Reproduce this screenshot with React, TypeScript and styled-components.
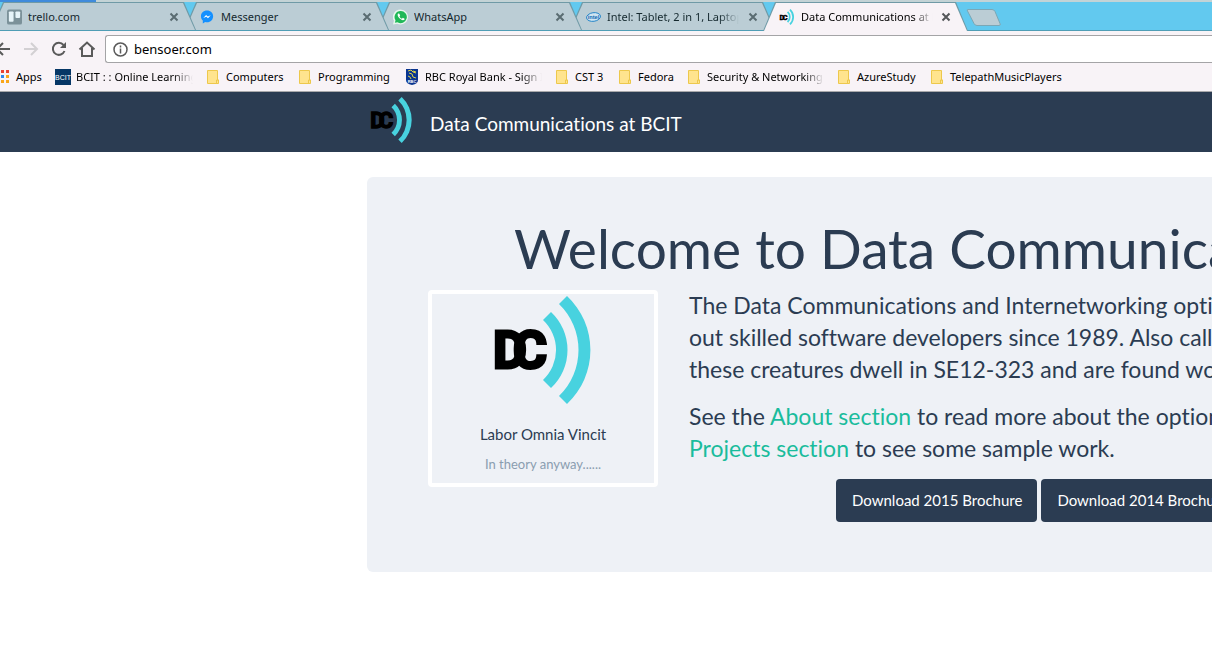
import React from "react";
import styled, { createGlobalStyle, css } from "styled-components";

const GlobalStyle = createGlobalStyle`
  * { box-sizing: border-box; }
  html, body { margin: 0; padding: 0; }
  body {
    background: #fff;
    overflow: hidden;
    font-family: Lato, "Liberation Sans", sans-serif;
    font-variant-ligatures: none;
    color: #2b3c52;
  }
`;

const Chrome = styled.div`
  background: #f8f3f7;
  border-bottom: 1px solid #a9a9ab;
  font-family: "Noto Sans", "Open Sans", sans-serif;
  font-size: 11px;
  line-height: 16px;
  color: #000;
`;

const TopEdge = styled.div`
  height: 2px;
  background: linear-gradient(to right, #3f8bdc 96px, #c3d3d6 96px);
`;

const TabStrip = styled.div`
  display: flex;
  height: 29px;
  background: #62c9ef;
  border-bottom: 1px solid #4f9db5;
`;

const Tabs = styled.div`
  display: flex;
  margin-left: -9px;
`;

const Tab = styled.div<{ $active?: boolean; $order: number }>`
  position: relative;
  z-index: ${(p) => p.$order};
  display: flex;
  align-items: center;
  flex: none;
  width: 205px;
  height: ${(p) => (p.$active ? 29 : 28)}px;
  margin-right: -12px;
  padding: ${(p) => (p.$active ? "1px 15px 0 16px" : "2px 15px 0 16px")};
  gap: 6px;
  color: ${(p) => (p.$active ? "#000" : "#14282e")};

  &::before,
  &::after {
    content: "";
    position: absolute;
    z-index: -1;
    inset: 0;
    background: #6f9aa6;
    clip-path: polygon(12px 0, calc(100% - 12px) 0, 100% 100%, 0 100%);
  }
  &::after {
    inset: 1px 1px 0;
    background: ${(p) => (p.$active ? "#f8f3f7" : "#bbcdd5")};
  }
`;

const fade = css`
  mask-image: linear-gradient(to right, #000 calc(100% - 20px), transparent);
`;

const TabTitle = styled.span<{ $fade?: boolean }>`
  flex: none;
  width: 132px;
  overflow: hidden;
  white-space: nowrap;
  ${(p) => p.$fade && fade}
`;

const CloseButton = styled.button`
  display: flex;
  align-items: center;
  justify-content: center;
  width: 16px;
  height: 16px;
  padding: 0;
  border: 0;
  background: none;
`;

const NewTabButton = styled.button`
  width: 36px;
  height: 19px;
  margin: 6px 0 0 10px;
  padding: 0;
  border: 0;
  background: none;
  svg { display: block; }
`;

const Toolbar = styled.div`
  display: flex;
  align-items: center;
  height: 32px;
  padding: 4px 0 0;
`;

const ToolButton = styled.button`
  display: flex;
  flex: none;
  width: 28px;
  height: 28px;
  padding: 0;
  border: 0;
  background: none;
  align-items: center;
  justify-content: center;
`;

const ToolButtons = styled.div`
  display: flex;
  flex: none;
  width: 105px;
  ${ToolButton}:first-child { margin-left: -11px; }
`;

const AddressBox = styled.label`
  display: flex;
  flex: 1;
  align-items: center;
  gap: 6px;
  height: 28px;
  padding-left: 7px;
  background: #fff;
  border: 1px solid #a4a4a6;
  border-right: 0;
  border-radius: 3px 0 0 3px;
`;

const AddressInput = styled.input`
  flex: 1;
  min-width: 0;
  padding: 0;
  border: 0;
  outline: 0;
  background: none;
  font: 13px "Noto Sans", "Open Sans", sans-serif;
  color: #000;
`;

const Bookmarks = styled.nav`
  display: flex;
  align-items: center;
  gap: 12px;
  height: 28px;
  overflow: hidden;
`;

const Bookmark = styled.a<{ $first?: boolean }>`
  display: flex;
  flex: none;
  align-items: center;
  gap: ${(p) => (p.$first ? 6 : 5)}px;
  color: inherit;
  text-decoration: none;
  white-space: nowrap;
  svg { flex: none; }
`;

const BookmarkLabel = styled.span<{ $width: number; $fade?: boolean }>`
  width: ${(p) => p.$width}px;
  ${(p) => p.$fade && "overflow: hidden;"}
  ${(p) => p.$fade && fade}
`;

const SiteHeader = styled.header`
  height: 60px;
  padding-left: 371px;
  background: #2b3c52;
`;

const Brand = styled.a`
  display: inline-flex;
  align-items: center;
  gap: 18px;
  height: 60px;
  color: #fff;
  font-size: 19px;
  line-height: 24px;
  text-decoration: none;
  white-space: nowrap;
  svg { margin-bottom: 4px; }
  span { padding-top: 3px; }
`;

const Main = styled.main`
  padding: 25px 0 81px 367px;
`;

const Jumbotron = styled.section`
  padding: 39px 0 50px 61px;
  background: #eef1f6;
  border-radius: 6px 0 0 6px;
  overflow: hidden;
`;

const Title = styled.h1`
  margin: 0;
  padding-left: 86px;
  font-size: 55px;
  font-weight: 400;
  line-height: 64px;
  white-space: nowrap;
`;

const Columns = styled.div`
  display: flex;
  align-items: flex-start;
  gap: 31px;
  padding-top: 9px;
`;

const Tile = styled.figure`
  flex: none;
  display: flex;
  flex-direction: column;
  align-items: center;
  width: 230px;
  margin: 1px 0 0;
  padding: 2px 0 9px;
  border: 4px solid #fff;
  border-radius: 4px;
  font-size: 15px;
  line-height: 20px;
`;

const Motto = styled.figcaption`
  margin-top: 20px;
  text-align: center;
  small {
    display: block;
    margin-top: 10px;
    font-size: 13px;
    color: #8a9db0;
  }
`;

const Copy = styled.div`
  flex: 1;
  min-width: 0;
  white-space: nowrap;
  p {
    margin: 0 0 15px;
    font-size: 23px;
    line-height: 32px;
  }
  a { color: #1abc9c; text-decoration: none; }
`;

const ButtonRow = styled.div`
  display: flex;
  gap: 4px;
  padding-left: 147px;
`;

const BrochureButton = styled.button`
  flex: none;
  height: 43px;
  padding: 0 15px 2px 16px;
  border: 0;
  border-radius: 4px;
  background: #2b3c52;
  color: #fff;
  font: 15px/24px Lato, sans-serif;
  font-variant-ligatures: none;
`;

const LogoMark = styled.svg`
  overflow: visible;
`;

const Logo = ({ width, height }: { width: number; height: number }) => (
  <LogoMark width={width} height={height} viewBox="1 0 96 108" aria-hidden="true">
    <g
      fill="#000"
      stroke="#000"
      strokeWidth="3"
      fontFamily="Roboto, sans-serif"
      fontWeight="700"
      fontSize="52"
    >
      <text x="-1" y="72">D</text>
      <text x="19" y="72">C</text>
    </g>
    <path
      fill="#48d2df"
      d="M73 0A74 74 0 0 1 73 108L65 100A64 64 0 0 0 65 8ZM57 16A52 52 0 0 1 57 92L49 84A41 41 0 0 0 49 24Z"
    />
  </LogoMark>
);

const FolderIcon = () => (
  <svg width="16" height="16" viewBox="0 0 16 16" aria-hidden="true">
    <path d="M2.500 1.500h10v9.500h1v3.500h-11z" fill="#ffe48e" stroke="#edc84c" />
    <path d="M11.500 14v-3h2" fill="none" stroke="#edc84c" />
  </svg>
);

const AppsIcon = () => (
  <svg width="10" height="16" viewBox="0 0 10 16" aria-hidden="true">
    {["#ea4335", "#2f88f0", "#f9a61a"].map((c, i) => (
      <g key={c} fill={c}>
        <rect x="1" y={1 + i * 5} width="3" height="3" />
        <rect x="6" y={1 + i * 5} width="3" height="3" fill={i === 0 ? c : "#f9a61a"} />
      </g>
    ))}
  </svg>
);

const BcitIcon = () => (
  <svg width="16" height="16" viewBox="0 0 16 16" aria-hidden="true">
    <rect width="16" height="16" fill="#063766" />
    <text x="8" y="11" fill="#fff" fontSize="7" textAnchor="middle" fontFamily="Liberation Sans, sans-serif">BCIT</text>
  </svg>
);

const RbcIcon = () => (
  <svg width="16" height="16" viewBox="0 0 16 16" aria-hidden="true">
    <path d="M2 0h12v11q0 4-6 5q-6-1-6-5z" fill="#0a3590" />
    <path d="M4 2l3-1 2 2 3 1M5 4l3 1 1 3 3 1M4 7l2 1 1 2M9 2l3 1" stroke="#d9d14a" fill="none" />
    <text x="8" y="14" fill="#fff" fontSize="4" fontWeight="700" textAnchor="middle" fontFamily="Liberation Sans, sans-serif">RBC</text>
  </svg>
);

const TrelloIcon = () => (
  <svg width="16" height="16" viewBox="0 0 16 16" aria-hidden="true">
    <rect width="16" height="16" rx="2" fill="#7b9199" />
    <rect x="2" y="2" width="5" height="11" rx="1" fill="#e6f4f9" />
    <rect x="9" y="2" width="5" height="7" rx="1" fill="#e6f4f9" />
  </svg>
);

const MessengerIcon = () => (
  <svg width="16" height="16" viewBox="0 0 16 16" aria-hidden="true">
    <path d="M7.500 1C3.500 1 1 3.700 1 7.200c0 2 .8 3.500 2 4.600V15l2.500-1.600c5 1.200 8.500-2 8.500-6.200C14 3.700 11.500 1 7.500 1z" fill="#1490ff" />
    <path d="M3.500 9l3-3.200L8.300 7.400 11.500 6l-3 3.200L6.800 7.700z" fill="#fff" />
  </svg>
);

const WhatsAppIcon = () => (
  <svg width="16" height="16" viewBox="0 0 16 16" aria-hidden="true">
    <path d="M8 0a8 8 0 1 1-3.500 15.200L0 16l1-4A8 8 0 0 1 8 0z" fill="#e8f7ee" />
    <path d="M8 1.500a6.500 6.500 0 1 1-3.200 12L2 14.200l.7-2.700A6.500 6.500 0 0 1 8 1.500z" fill="#20b858" />
    <path d="M5.500 4.300c-2.200 2.200 2.700 7.600 5.800 7 .8-.2 1.200-1 1-1.500l-1.800-.9-1 1c-1.200-.5-2-1.300-2.600-2.500l.7-.8-.8-2z" fill="#fff" />
  </svg>
);

const IntelIcon = () => (
  <svg width="16" height="16" viewBox="0 0 16 16" aria-hidden="true">
    <ellipse cx="8" cy="8" rx="7.500" ry="4.600" fill="#cfe4f1" stroke="#2384c8" transform="rotate(-8 8 8)" />
    <text x="8" y="10" fill="#0d68b1" fontSize="6" fontWeight="700" textAnchor="middle" fontFamily="Liberation Sans, sans-serif">intel</text>
  </svg>
);

const CloseIcon = ({ color }: { color: string }) => (
  <svg width="10" height="10" viewBox="0 0 10 10" aria-hidden="true">
    <path d="M1.500 1.500l7 7m0-7l-7 7" stroke={color} strokeWidth="2" />
  </svg>
);

const tabs = [
  { title: "trello.com", icon: <TrelloIcon /> },
  { title: "Messenger", icon: <MessengerIcon /> },
  { title: "WhatsApp", icon: <WhatsAppIcon /> },
  { title: "Intel: Tablet, 2 in 1, Laptop", icon: <IntelIcon />, fade: true },
  { title: "Data Communications at BCIT", icon: <Logo width={16} height={16} />, fade: true, active: true },
];

const bookmarks = [
  { label: "Apps", icon: <AppsIcon />, width: 27 },
  { label: "BCIT : : Online Learning", icon: <BcitIcon />, width: 117, fade: true },
  { label: "Computers", icon: <FolderIcon />, width: 59 },
  { label: "Programming", icon: <FolderIcon />, width: 74 },
  { label: "RBC Royal Bank - Sign In", icon: <RbcIcon />, width: 117, fade: true },
  { label: "CST 3", icon: <FolderIcon />, width: 30 },
  { label: "Fedora", icon: <FolderIcon />, width: 36 },
  { label: "Security & Networking", icon: <FolderIcon />, width: 117, fade: true },
  { label: "AzureStudy", icon: <FolderIcon />, width: 60 },
  { label: "TelepathMusicPlayers", icon: <FolderIcon />, width: 116 },
];

export default function App() {
  return (
    <>
      <GlobalStyle />
      <Chrome>
        <TopEdge />
        <TabStrip>
          <Tabs>
            {tabs.map((t, i) => (
              <Tab key={t.title} $active={t.active} $order={t.active ? 10 : tabs.length - i}>
                {t.icon}
                <TabTitle $fade={t.fade}>{t.title}</TabTitle>
                <CloseButton aria-label={`Close ${t.title}`}>
                  <CloseIcon color={t.active ? "#55575a" : "#5a6c72"} />
                </CloseButton>
              </Tab>
            ))}
          </Tabs>
          <NewTabButton aria-label="New tab">
            <svg width="36" height="19" viewBox="0 0 36 19">
              <path d="M2 1.500h24q2 0 3 2l5 12q1 2-1 2H11q-2 0-3-2L1.500 3q-1-1.500.5-1.500z" fill="#bbcdd5" stroke="#7ba7b5" />
            </svg>
          </NewTabButton>
        </TabStrip>
        <Toolbar>
          <ToolButtons>
            <ToolButton aria-label="Back">
              <svg width="16" height="16" viewBox="0 0 16 16" fill="none" stroke="#5a5a5a" strokeWidth="2">
                <path d="M15 8H3M8 2L2 8l6 6" />
              </svg>
            </ToolButton>
            <ToolButton aria-label="Forward">
              <svg width="16" height="16" viewBox="0 0 16 16" fill="none" stroke="#d3d0d3" strokeWidth="2">
                <path d="M1 8h12M8 2l6 6-6 6" />
              </svg>
            </ToolButton>
            <ToolButton aria-label="Reload">
              <svg width="16" height="16" viewBox="0 0 16 16" fill="none" stroke="#5a5a5a" strokeWidth="2">
                <path d="M13.500 10A6 6 0 1 1 12.500 4" />
                <path d="M15 1v6H9z" fill="#5a5a5a" stroke="none" />
              </svg>
            </ToolButton>
            <ToolButton aria-label="Home">
              <svg width="18" height="16" viewBox="0 0 18 16" fill="none" stroke="#5a5a5a" strokeWidth="2">
                <path d="M1.500 8.500L9 1.500l7.500 7M4 7v8h10V7" />
              </svg>
            </ToolButton>
          </ToolButtons>
          <AddressBox>
            <svg width="15" height="15" viewBox="0 0 15 15" fill="none" stroke="#5a5a5a" aria-hidden="true">
              <circle cx="7.500" cy="7.500" r="6.500" strokeWidth="1.500" />
              <path d="M7.500 6.500v5M7.500 3.500v2" strokeWidth="1.500" />
            </svg>
            <AddressInput aria-label="Address" defaultValue="bensoer.com" />
          </AddressBox>
        </Toolbar>
        <Bookmarks>
          {bookmarks.map((b, i) => (
            <Bookmark key={b.label} href="#" $first={i === 0}>
              {b.icon}
              <BookmarkLabel $width={b.width} $fade={b.fade}>{b.label}</BookmarkLabel>
            </Bookmark>
          ))}
        </Bookmarks>
      </Chrome>
      <SiteHeader>
        <Brand href="#">
          <Logo width={41} height={46} />
          <span>Data Communications at BCIT</span>
        </Brand>
      </SiteHeader>
      <Main>
        <Jumbotron>
          <Title>Welcome to Data Communications</Title>
          <Columns>
            <Tile>
              <Logo width={96} height={108} />
              <Motto>
                Labor Omnia Vincit
                <small>In theory anyway......</small>
              </Motto>
            </Tile>
            <Copy>
              <p>
                The Data Communications and Internetworking option
                <br />
                out skilled software developers since 1989. Also called
                <br />
                these creatures dwell in SE12-323 and are found working
              </p>
              <p>
                See the <a href="#">About section</a> to read more about the option
                <br />
                <a href="#">Projects section</a> to see some sample work.
              </p>
              <ButtonRow>
                <BrochureButton>Download 2015 Brochure</BrochureButton>
                <BrochureButton>Download 2014 Brochure</BrochureButton>
              </ButtonRow>
            </Copy>
          </Columns>
        </Jumbotron>
      </Main>
    </>
  );
}
